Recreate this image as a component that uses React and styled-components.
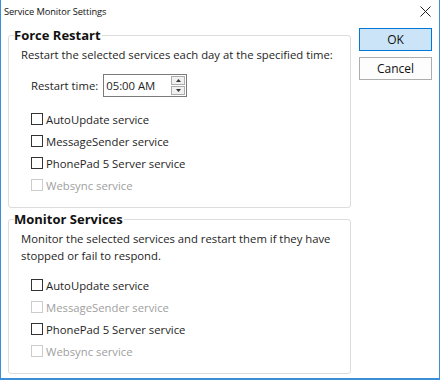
import styled, { createGlobalStyle } from "styled-components";

const Global = createGlobalStyle`
  html, body {
    margin: 0;
    padding: 0;
    background: #ffffff;
  }
  * { box-sizing: border-box; }
`;

const forceServices = [
  { name: "AutoUpdate service", disabled: false },
  { name: "MessageSender service", disabled: false },
  { name: "PhonePad 5 Server service", disabled: false },
  { name: "Websync service", disabled: true },
];

const monitorServices = [
  { name: "AutoUpdate service", disabled: false },
  { name: "MessageSender service", disabled: true },
  { name: "PhonePad 5 Server service", disabled: false },
  { name: "Websync service", disabled: true },
];

export default function App() {
  return (
    <>
      <Global />
      <Window>
        <TitleBar>
          <span>Service Monitor Settings</span>
          <Close>
            <svg width="11" height="11" viewBox="0 0 11 11">
              <path d="M0.5 0.5 L10.5 10.5 M10.5 0.5 L0.5 10.5" stroke="#222" strokeWidth="1" />
            </svg>
          </Close>
        </TitleBar>
        <Body>
          <Groups>
            <Group>
              <Legend>Force Restart</Legend>
              <Text>Restart the selected services each day at the specified time:</Text>
              <TimeRow>
                <span>Restart time:</span>
                <TimeBox>
                  <span>05:00 AM</span>
                  <Spinner>
                    <SpinBtn>
                      <svg width="5" height="3" viewBox="0 0 5 3"><path d="M0 3 L2.5 0 L5 3 Z" fill="#333" /></svg>
                    </SpinBtn>
                    <SpinBtn>
                      <svg width="5" height="3" viewBox="0 0 5 3"><path d="M0 0 L2.5 3 L5 0 Z" fill="#333" /></svg>
                    </SpinBtn>
                  </Spinner>
                </TimeBox>
              </TimeRow>
              <List>
                {forceServices.map((s) => (
                  <Check key={s.name} $disabled={s.disabled}>
                    <Box $disabled={s.disabled} />
                    {s.name}
                  </Check>
                ))}
              </List>
            </Group>
            <Group $second>
              <Legend>Monitor Services</Legend>
              <Text>
                Monitor the selected services and restart them if they have
                <br />
                stopped or fail to respond.
              </Text>
              <List $top={10}>
                {monitorServices.map((s) => (
                  <Check key={s.name} $disabled={s.disabled}>
                    <Box $disabled={s.disabled} />
                    {s.name}
                  </Check>
                ))}
              </List>
            </Group>
          </Groups>
          <Buttons>
            <Button $primary>OK</Button>
            <Button>Cancel</Button>
          </Buttons>
        </Body>
      </Window>
    </>
  );
}

const Window = styled.div`
  width: 440px;
  height: 380px;
  background: #ffffff;
  border: 1px solid #3b8fd9;
  border-top: none;
  border-bottom-width: 2px;
  font-family: "Open Sans", "Noto Sans", sans-serif;
  font-size: 11.3px;
  color: #1e1e1e;
  display: flex;
  flex-direction: column;
`;

const TitleBar = styled.div`
  height: 23px;
  display: flex;
  align-items: center;
  justify-content: space-between;
  padding: 0 7px 0 3px;
  font-size: 9.3px;
  letter-spacing: -0.1px;
  color: #111;
`;

const Close = styled.div`
  display: flex;
  align-items: center;
  justify-content: center;
  width: 14px;
  height: 14px;
`;

const Body = styled.div`
  flex: 1;
  display: flex;
  padding: 5px 7px 0 7px;
  gap: 8px;
`;

const Groups = styled.div`
  width: 344px;
  display: flex;
  flex-direction: column;
  gap: 4px;
`;

const Group = styled.fieldset`
  margin: 0;
  border: 1px solid #dcdcdc;
  border-radius: 3px;
  padding: 0 0 0 12px;
  height: ${(p) => (p.$second ? "162px" : "180px")};
`;

const Legend = styled.legend`
  font-weight: 700;
  font-size: 13px;
  color: #111;
  padding: 0 1px 0 0;
  margin-left: -7px;
  line-height: 14px;
`;

const Text = styled.div`
  margin-top: 4px;
  line-height: 17px;
`;

const TimeRow = styled.div`
  display: flex;
  align-items: center;
  gap: 5px;
  margin: 11px 0 0 10px;
`;

const TimeBox = styled.div`
  width: 84px;
  height: 23px;
  border: 1px solid #7a7a7a;
  display: flex;
  align-items: center;
  justify-content: space-between;
  padding: 0 1px 0 2px;
`;

const Spinner = styled.div`
  display: flex;
  flex-direction: column;
  gap: 1px;
  width: 14px;
  height: 19px;
`;

const SpinBtn = styled.div`
  flex: 1;
  display: flex;
  align-items: center;
  justify-content: center;
  background: #f0f0f0;
  border: 1px solid #adadad;
`;

const List = styled.div`
  display: flex;
  flex-direction: column;
  margin: ${(p) => p.$top ?? 11}px 0 0 10px;
`;

const Check = styled.div`
  height: 22px;
  display: flex;
  align-items: center;
  gap: 3px;
  color: ${(p) => (p.$disabled ? "#a0a0a0" : "#1e1e1e")};
`;

const Box = styled.span`
  width: 12px;
  height: 12px;
  border: 1px solid ${(p) => (p.$disabled ? "#cccccc" : "#333333")};
  background: #fff;
`;

const Buttons = styled.div`
  display: flex;
  flex-direction: column;
  gap: 6px;
`;

const Button = styled.button`
  width: 73px;
  height: 23px;
  font-family: inherit;
  font-size: 12px;
  color: #111;
  padding: 0;
  border: 1px solid ${(p) => (p.$primary ? "#0078d7" : "#adadad")};
  background: ${(p) => (p.$primary ? "#cce4f7" : "#fdfdfd")};
`;
